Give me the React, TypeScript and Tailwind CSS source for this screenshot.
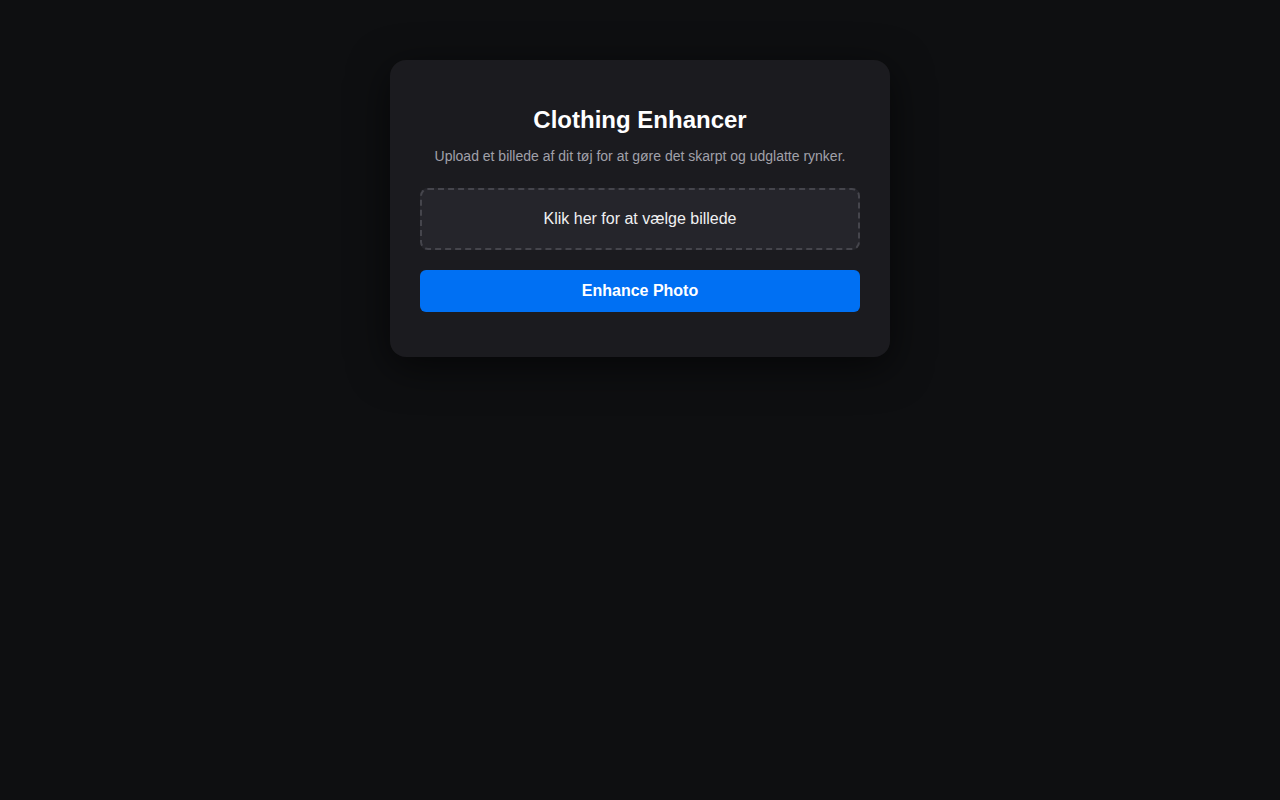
export default function App() {
  return (
    <div
      className="min-h-screen bg-[#0e0f11] flex justify-center pt-[60px]"
      style={{ fontFamily: '"Liberation Sans", Arial, sans-serif' }}
    >
      <div className="w-[500px] h-fit rounded-2xl bg-[#1b1b1f] px-[30px] pt-[46px] pb-[45px] shadow-[0_10px_40px_rgba(0,0,0,0.6)] text-center">
        <h1 className="text-[24px] leading-[28px] font-bold text-white">Clothing Enhancer</h1>
        <p className="mt-[12px] text-[14px] leading-[20px] text-[#a1a1aa]">
          Upload et billede af dit tøj for at gøre det skarpt og udglatte rynker.
        </p>
        <label className="mt-[22px] flex h-[62px] cursor-pointer items-center justify-center rounded-lg border-2 border-dashed border-[#45454c] bg-[#25252b] text-[16px] text-[#f0f0f2]">
          Klik her for at vælge billede
          <input type="file" accept="image/*" className="hidden" />
        </label>
        <button className="mt-[20px] h-[42px] w-full rounded-md bg-[#0070f3] text-[16px] font-bold text-white">
          Enhance Photo
        </button>
      </div>
    </div>
  );
}
